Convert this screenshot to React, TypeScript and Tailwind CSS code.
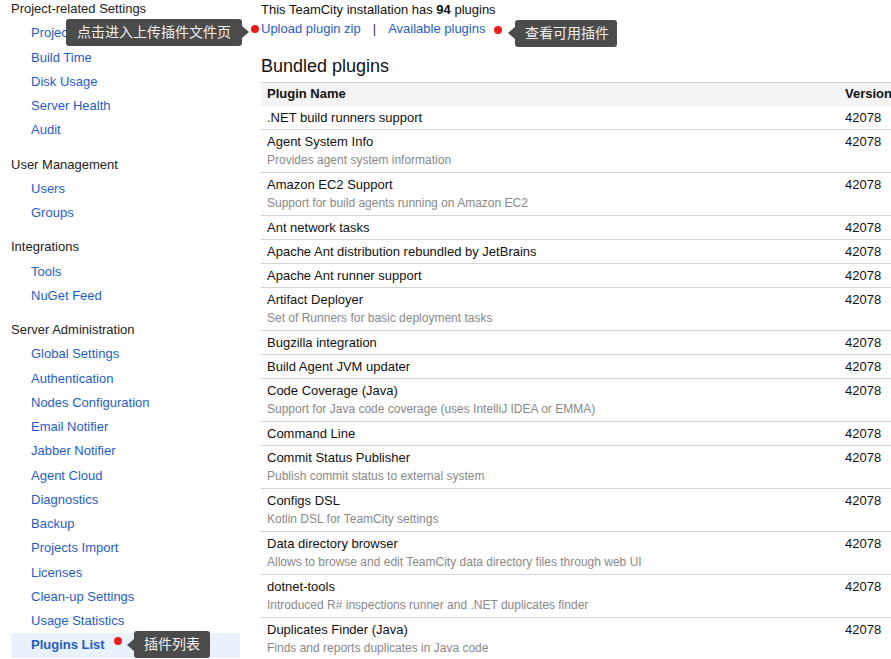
import React from 'react';

const sections = [
  {
    title: 'Project-related Settings',
    items: ['Projects', 'Build Time', 'Disk Usage', 'Server Health', 'Audit'],
  },
  { title: 'User Management', items: ['Users', 'Groups'] },
  { title: 'Integrations', items: ['Tools', 'NuGet Feed'] },
  {
    title: 'Server Administration',
    items: [
      'Global Settings',
      'Authentication',
      'Nodes Configuration',
      'Email Notifier',
      'Jabber Notifier',
      'Agent Cloud',
      'Diagnostics',
      'Backup',
      'Projects Import',
      'Licenses',
      'Clean-up Settings',
      'Usage Statistics',
      'Plugins List',
    ],
  },
];

const plugins: { name: string; desc?: string }[] = [
  { name: '.NET build runners support' },
  { name: 'Agent System Info', desc: 'Provides agent system information' },
  { name: 'Amazon EC2 Support', desc: 'Support for build agents running on Amazon EC2' },
  { name: 'Ant network tasks' },
  { name: 'Apache Ant distribution rebundled by JetBrains' },
  { name: 'Apache Ant runner support' },
  { name: 'Artifact Deployer', desc: 'Set of Runners for basic deployment tasks' },
  { name: 'Bugzilla integration' },
  { name: 'Build Agent JVM updater' },
  { name: 'Code Coverage (Java)', desc: 'Support for Java code coverage (uses IntelliJ IDEA or EMMA)' },
  { name: 'Command Line' },
  { name: 'Commit Status Publisher', desc: 'Publish commit status to external system' },
  { name: 'Configs DSL', desc: 'Kotlin DSL for TeamCity settings' },
  { name: 'Data directory browser', desc: 'Allows to browse and edit TeamCity data directory files through web UI' },
  { name: 'dotnet-tools', desc: 'Introduced R# inspections runner and .NET duplicates finder' },
  { name: 'Duplicates Finder (Java)', desc: 'Finds and reports duplicates in Java code' },
];

function Dot({ className }: { className: string }) {
  return <span className={`absolute w-[8px] h-[8px] rounded-full bg-[#f01b1b] ${className}`} />;
}

export default function App() {
  return (
    <div
      className="relative w-[891px] h-[659px] overflow-hidden bg-white text-[13px] text-[#111]"
      style={{ fontFamily: '"Liberation Sans", Arial, "Noto Sans CJK SC", sans-serif' }}
    >
      <div className="flex -mt-[3px] pl-[11px]">
        {/* 侧边栏 */}
        <div className="w-[229px] shrink-0">
          {sections.map((s, i) => (
            <div key={s.title} className={i > 0 ? 'mt-[10px]' : ''}>
              <div className="h-[24.25px] leading-[24px] text-[#222]">{s.title}</div>
              {s.items.map((it) => (
                <div
                  key={it}
                  className={
                    it === 'Plugins List'
                      ? 'h-[24.25px] leading-[24px] pl-[20px] bg-[#e8f1fc] font-bold text-[#1f5dc6]'
                      : 'h-[24.25px] leading-[24px] pl-[20px] text-[#1f5dc6]'
                  }
                >
                  {it}
                </div>
              ))}
            </div>
          ))}
        </div>

        {/* 主内容 */}
        <div className="ml-[21px] mt-[3px] flex-1 min-w-0">
          <div className="h-[19px] leading-[19px]">
            This TeamCity installation has <b>94</b> plugins
          </div>
          <div className="h-[19px] leading-[19px] text-[#1f5dc6]">
            Upload plugin zip
            <span className="text-[#333] mx-[12px]">|</span>
            Available plugins
          </div>
          <h2 className="mt-[16px] h-[24px] leading-[24px] text-[18px] text-[#111]">Bundled plugins</h2>
          <div className="mt-[4px] w-[680px]">
            <div className="flex h-[24px] border-t border-[#cfcfcf] bg-[#f4f4f4] font-bold leading-[22px]">
              <div className="w-[578px] pl-[6px]">Plugin Name</div>
              <div className="pl-[6px]">Version</div>
            </div>
            {plugins.map((p) => (
              <div key={p.name} className="flex border-b border-[#d4d4d4]">
                <div className="w-[578px] pl-[6px]">
                  <div className="h-[23px] leading-[23px]">{p.name}</div>
                  {p.desc && <div className="h-[19px] leading-[14px] text-[12px] text-[#888]">{p.desc}</div>}
                </div>
                <div className="pl-[6px] h-[23px] leading-[23px]">42078</div>
              </div>
            ))}
          </div>
        </div>
      </div>

      {/* 提示气泡 */}
      <Dot className="left-[251px] top-[25px]" />
      <div className="absolute left-[66px] top-[19px] h-[27px] w-[176px] rounded-[3px] bg-[#4b4b4b] pl-[11px] text-[14px] leading-[27px] text-[#f0f0f0]">
        点击进入上传插件文件页
        <span className="absolute right-[-7px] top-[7px] border-y-[6px] border-l-[7px] border-y-transparent border-l-[#4b4b4b]" />
      </div>

      <Dot className="left-[494px] top-[26px]" />
      <div className="absolute left-[515px] top-[20px] h-[27px] w-[102px] rounded-[3px] bg-[#4b4b4b] pl-[10px] text-[14px] leading-[27px] text-[#f0f0f0]">
        查看可用插件
        <span className="absolute left-[-7px] top-[7px] border-y-[6px] border-r-[7px] border-y-transparent border-r-[#4b4b4b]" />
      </div>

      <Dot className="left-[114px] top-[637px]" />
      <div className="absolute left-[134px] top-[631px] h-[27px] w-[76px] rounded-[3px] bg-[#4b4b4b] pl-[10px] text-[14px] leading-[27px] text-[#f0f0f0]">
        插件列表
        <span className="absolute left-[-7px] top-[8px] border-y-[6px] border-r-[7px] border-y-transparent border-r-[#4b4b4b]" />
      </div>
    </div>
  );
}
